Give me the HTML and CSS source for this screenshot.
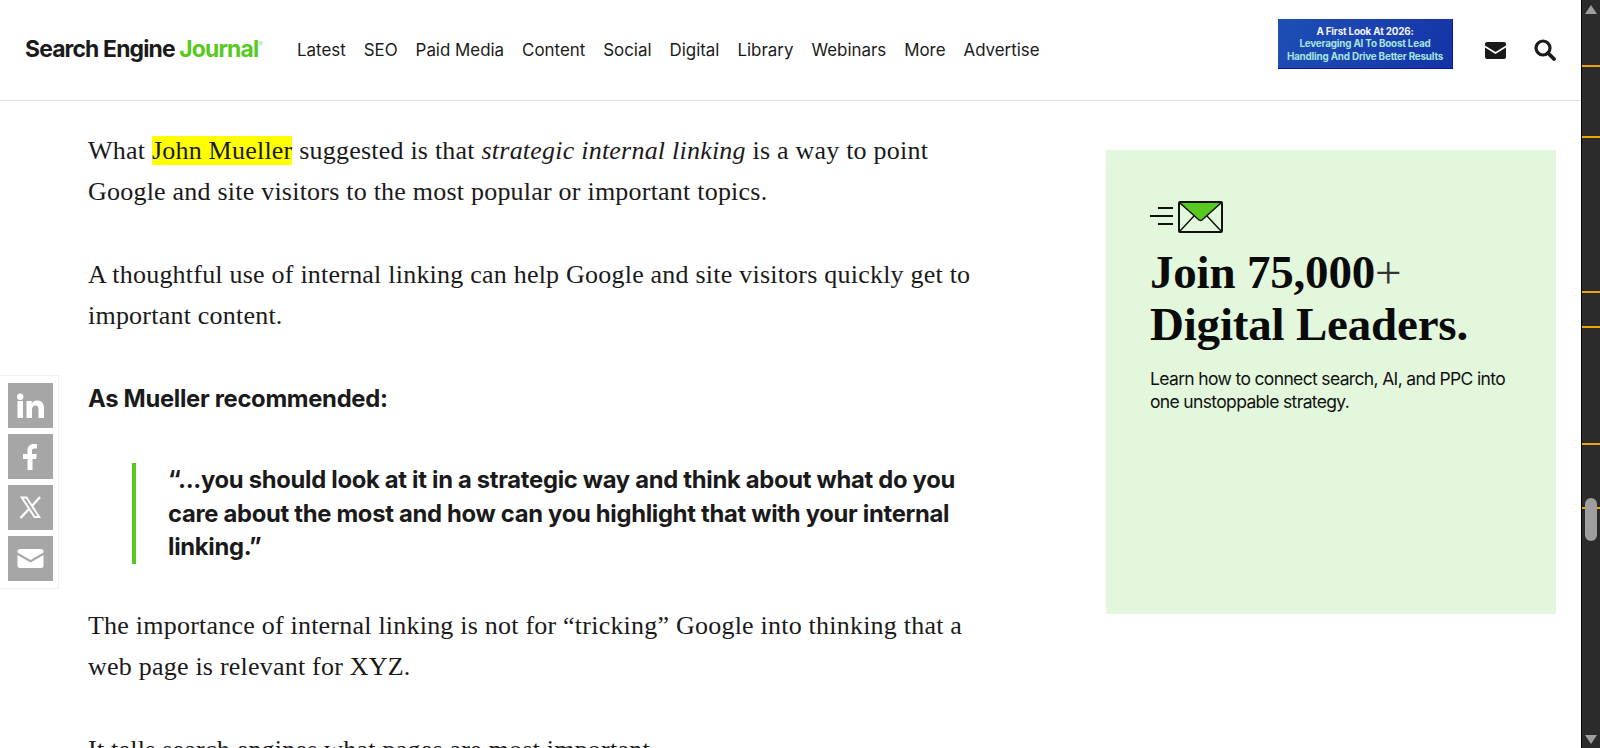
FILE: index.html
```html
<!DOCTYPE html>
<html lang="en">
<head>
<meta charset="utf-8">
<title>Search Engine Journal</title>
<link rel="stylesheet" href="styles.css">
</head>
<body>
<div class="window">
  <div class="page">
    <header class="site-header">
      <a class="logo">Search Engine <span class="logo-green">Journal</span><sup class="logo-reg">®</sup></a>
      <nav class="nav">
        <a>Latest</a><a>SEO</a><a>Paid Media</a><a>Content</a><a>Social</a><a>Digital</a><a>Library</a><a>Webinars</a><a>More</a><a>Advertise</a>
      </nav>
      <div class="banner">
        <span class="banner-white">A First Look At 2026:</span>
        <span>Leveraging AI To Boost Lead</span>
        <span>Handling And Drive Better Results</span>
      </div>
      <svg class="icon-mail" viewBox="0 0 21 17"><path d="M2 0h17a2 2 0 0 1 2 2v1.600l-10.500 6.400L0 3.600V2a2 2 0 0 1 2-2z" fill="#1a1a1a"/><path d="M0 5.600l10.500 6.400L21 5.600V15a2 2 0 0 1-2 2H2a2 2 0 0 1-2-2z" fill="#1a1a1a"/></svg>
      <svg class="icon-search" viewBox="0 0 22 22"><circle cx="9" cy="9" r="7" fill="none" stroke="#1a1a1a" stroke-width="3.200"/><path d="M14 14l6 6" stroke="#1a1a1a" stroke-width="3.800" stroke-linecap="round"/></svg>
    </header>
    <main class="content">
      <article class="article">
        <p class="para">What <mark class="hl">John Mueller</mark> suggested is that <em>strategic internal linking</em> is a way to point Google and site visitors to the most popular or important topics.</p>
        <p class="para">A thoughtful use of internal linking can help Google and site visitors quickly get to important content.</p>
        <p class="lead">As Mueller recommended:</p>
        <blockquote class="quote">“...you should look at it in a strategic way and think about what do you care about the most and how can you highlight that with your internal linking.”</blockquote>
        <p class="para">The importance of internal linking is not for “tricking” Google into thinking that a web page is relevant for XYZ.</p>
        <p class="para">It tells search engines what pages are most important.</p>
      </article>
      <aside class="card">
        <svg class="card-icon" viewBox="0 0 74 33">
          <path d="M8 7h15M0 15h23M8 23h15" stroke="#111" stroke-width="2" fill="none"/>
          <path d="M29 2h42L52 19a2.500 2.500 0 0 1-3 0z" fill="#58c91f"/>
          <rect x="29" y="1" width="43" height="30" rx="1" fill="none" stroke="#111" stroke-width="2"/>
          <path d="M30 2l19 17a2.500 2.500 0 0 0 3 0L71 2M30 30l14-15M71 30L57 15" fill="none" stroke="#111" stroke-width="1.500"/>
        </svg>
        <h2 class="card-title">Join 75,000<span class="card-plus">+</span><br>Digital Leaders.</h2>
        <p class="card-text">Learn how to connect search, AI, and PPC into one unstoppable strategy.</p>
      </aside>
    </main>
    <div class="share">
      <a class="share-btn"><svg viewBox="0 0 45 45"><path fill="#fff" d="M9.500 18h5.500v17H9.500zM12.200 10.500a3.200 3.200 0 1 1 0 6.400 3.200 3.200 0 0 1 0-6.400zM18.500 18h5.300v2.400c1-1.700 2.800-2.900 5.300-2.900 5.200 0 6.900 3.300 6.900 8V35h-5.500v-8.300c0-2.300-.6-4.300-3-4.300s-3.500 1.800-3.500 4.200V35h-5.500z"/></svg></a>
      <a class="share-btn"><svg viewBox="0 0 45 45"><path fill="#fff" d="M19.500 36V25H15v-5h4.500v-3.500c0-4.300 2.500-6.500 6.200-6.500 1.500 0 2.800.1 3.300.2v4.400h-2.400c-1.900 0-2.600.9-2.600 2.400V20h4.800l-.7 5H24.500v11z"/></svg></a>
      <a class="share-btn"><svg viewBox="0 0 45 45"><path fill="none" stroke="#fff" stroke-width="2" d="M13.800 12.500h4.700l12.700 19.500h-4.700z"/><path fill="none" stroke="#fff" stroke-width="2.400" d="M32 12l-8.200 9.200M20.500 24.500L12.500 33"/></svg></a>
      <a class="share-btn"><svg viewBox="0 0 45 45"><path fill="#fff" d="M12 13h21a2.500 2.500 0 0 1 2.500 2.500v1L22.500 24 9.500 16.500v-1A2.500 2.500 0 0 1 12 13z"/><path fill="#fff" d="M9.500 19l13 7.500 13-7.500v10.500a2.500 2.500 0 0 1-2.500 2.500H12a2.500 2.500 0 0 1-2.500-2.500z"/></svg></a>
    </div>
  </div>
  <div class="scrollbar">
    <span class="arrow-up"></span>
    <i class="mark mark-1"></i><i class="mark mark-2"></i><i class="mark mark-3"></i><i class="mark mark-4"></i><i class="mark mark-5"></i><i class="mark mark-6"></i>
    <span class="thumb"></span>
    <span class="arrow-down"></span>
  </div>
</div>
</body>
</html>
```
FILE: styles.css
```css
* { box-sizing: border-box; }
html, body { margin: 0; height: 100%; overflow: hidden; background: #fff; }
.window { display: flex; height: 748px; }
.page { position: relative; flex: 1; min-width: 0; overflow: hidden; }

.site-header {
  display: flex; align-items: center; height: 101px;
  padding: 0 25px 2px 25px;
  border-bottom: 1px solid #e0e0e0;
  font-family: Inter, sans-serif;
  color: #1a1a1a;
}
.logo { font-weight: 700; font-size: 22.900px; letter-spacing: -0.850px; color: #1a1a1a; white-space: nowrap; width: 272px; flex: none; }
.logo-green { color: #58c91f; }
.logo-reg { font-size: 7px; color: #9fdc80; font-weight: 400; vertical-align: 10px; line-height: 0; }
.nav { display: flex; gap: 18px; font-size: 16.900px; white-space: nowrap; margin-right: auto; margin-top: 1px; }
.banner {
  display: flex; flex-direction: column; align-items: center; justify-content: center;
  width: 175px; height: 50px; margin-right: 32px; margin-bottom: 10px;
  background: linear-gradient(120deg, #1e4fb4, #1a3fae 60%, #1233a5);
  border-bottom: 1px solid #0a10b0; border-right: 1px solid #1010b0;
  color: #a5e6e2; font-size: 9.900px; font-weight: 700; line-height: 12.500px; letter-spacing: -0.200px;
  white-space: nowrap;
}
.banner-white { color: #f0f4ff; }
.icon-mail { width: 21px; height: 17px; margin-right: 28px; margin-top: 2px; flex: none; }
.icon-search { width: 22px; height: 22px; flex: none; margin-top: 2px; }

.content { display: flex; align-items: flex-start; padding-left: 88px; padding-right: 25px; justify-content: space-between; }
.article { width: 890px; padding-top: 29px; font-family: "Liberation Serif", serif; color: #1a1a1a; }
.para { margin: 0 0 41px; font-size: 26px; line-height: 41.400px; letter-spacing: .22px; }
.hl { background: #ffff00; color: inherit; }
.lead { margin: 0 0 44px; font-family: Inter, sans-serif; font-weight: 700; font-size: 23.800px; line-height: 41.400px; letter-spacing: -0.300px; }
.quote {
  margin: 0 0 41px 44px; padding: 0 0 0 32px;
  border-left: 4px solid #58c91f;
  font-family: Inter, sans-serif; font-weight: 700; font-size: 23.800px; line-height: 33.600px; letter-spacing: -0.300px;
}

.card { width: 450px; height: 464px; margin-top: 49px; padding: 51px 44px; background: #e3f7dc; flex: none; }
.card-icon { display: block; width: 74px; height: 33px; }
.card-title { margin: 12px 0 0; font-family: "Liberation Serif", serif; font-weight: 700; font-size: 47px; line-height: 52px; color: #0a0a0a; letter-spacing: -0.200px; white-space: nowrap; }
.card-plus { font-weight: 400; color: #333; }
.card-text { margin: 17px 0 0; font-family: Inter, sans-serif; font-size: 17.500px; line-height: 23px; letter-spacing: -0.650px; color: #111; }

.share {
  position: absolute; left: 0; top: 375px;
  display: flex; flex-direction: column; gap: 6px;
  width: 59px; height: 214px; padding: 7px 7px 7px 8px;
  background: #fff; border: 1px solid #f0f0f0; border-left: 0;
}
.share-btn { display: block; width: 45px; height: 45px; background: #a6a6a6; }
.share-btn svg { display: block; width: 45px; height: 45px; }

.scrollbar { position: relative; width: 19px; flex: none; background: #2b2b2b; border-left: 1px solid #000; }
.mark { position: absolute; left: 0; right: 0; height: 2px; background: #f0a500; }
.mark-1 { top: 65px; } .mark-2 { top: 136px; } .mark-3 { top: 291px; } .mark-4 { top: 326px; } .mark-5 { top: 443px; } .mark-6 { top: 507px; }
.thumb { position: absolute; left: 3px; top: 498px; width: 12px; height: 43px; border-radius: 6px; background: #9e9e9e; }
.arrow-up, .arrow-down { position: absolute; left: 3px; width: 0; height: 0; border-left: 6px solid transparent; border-right: 6px solid transparent; }
.arrow-up { top: 5px; border-bottom: 9px solid #9e9e9e; }
.arrow-down { bottom: 4px; border-top: 9px solid #9e9e9e; }
```
